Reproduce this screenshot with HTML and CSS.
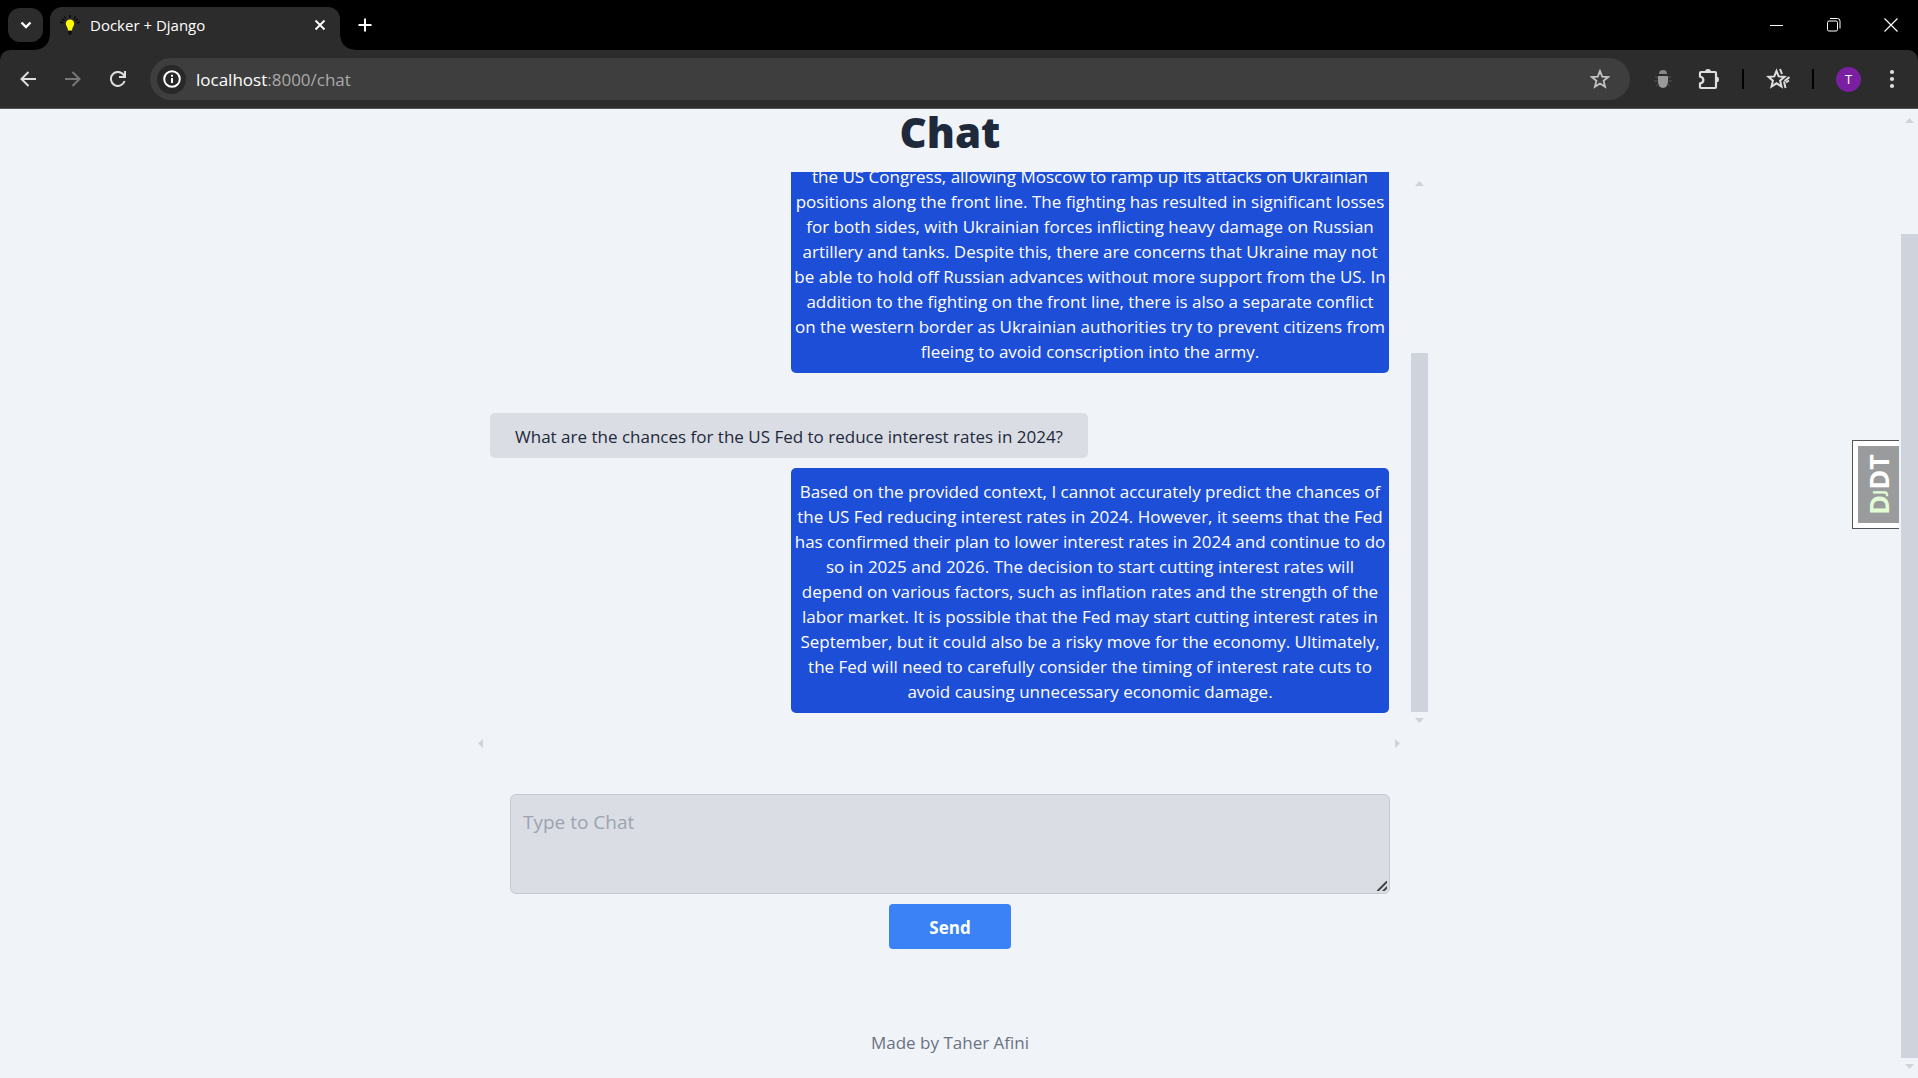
FILE: index.html
```html
<!DOCTYPE html>
<html lang="en">
<head>
<meta charset="utf-8">
<title>Docker + Django</title>
<link rel="stylesheet" href="styles.css">
</head>
<body>
<header class="browser">
  <div class="tabstrip">
    <button class="tab-search" aria-label="Search tabs"><svg width="16" height="16" viewBox="0 0 16 16"><path d="M3.500 5.500L8 10L12.500 5.500" fill="none" stroke="#fff" stroke-width="2.400"/></svg></button>
    <div class="tab">
      <svg width="20" height="20" viewBox="0 0 20 20"><path d="M10 0v3M4.500 1.500l1.500 2.500M15.500 1.500L14 4M0 7l3.500 1M20 7l-3.500 1M2 4l2.500 1.500M18 4l-2.500 1.500" stroke="#000" stroke-width="1.200"/><path d="M10 4.500C7.500 4.500 5.800 6.200 5.800 8.500C5.800 11 8 12.500 8 15.500H12C12 12.500 14.200 11 14.200 8.500C14.200 6.200 12.500 4.500 10 4.500Z" fill="#ff0"/><path d="M8 16h4v2l-1 2H9l-1-2z" fill="#111"/></svg>
      <span class="tab-title">Docker + Django</span>
      <button class="icon" aria-label="Close tab"><svg width="12" height="12" viewBox="0 0 12 12"><path d="M1.500 1.500L10.500 10.500M10.500 1.500L1.500 10.500" stroke="#fff" stroke-width="1.900"/></svg></button>
    </div>
    <button class="icon new-tab" aria-label="New tab"><svg width="14" height="14" viewBox="0 0 14 14"><path d="M7 .5v13M.5 7h13" stroke="#fff" stroke-width="2"/></svg></button>
    <div class="window-controls">
      <button class="icon" aria-label="Minimize"><svg width="14" height="14" viewBox="0 0 14 14"><path d="M0 7.500h13" stroke="#fff"/></svg></button>
      <button class="icon" aria-label="Restore"><svg width="14" height="14" viewBox="0 0 14 14" fill="none" stroke="#fff"><rect x=".5" y="3" width="10" height="10" rx="1.500"/><path d="M3 .5h7.500a2.500 2.500 0 0 1 2.500 2.500v7.500"/></svg></button>
      <button class="icon" aria-label="Close"><svg width="14" height="14" viewBox="0 0 14 14"><path d="M.5 .5l13 13M13.500 .5l-13 13" stroke="#fff" stroke-width="1.200"/></svg></button>
    </div>
  </div>
  <div class="toolbar">
    <nav class="nav">
      <button class="icon" aria-label="Back"><svg width="16" height="16" viewBox="0 0 16 16" fill="none" stroke="#dedede" stroke-width="2"><path d="M8.500 1L1.500 8L8.500 15M1.500 8H16"/></svg></button>
      <button class="icon" aria-label="Forward"><svg width="16" height="16" viewBox="0 0 16 16" fill="none" stroke="#777" stroke-width="2"><path d="M7.500 1L14.500 8L7.500 15M14.500 8H0"/></svg></button>
      <button class="icon" aria-label="Reload"><svg width="16" height="16" viewBox="0 0 16 16" fill="none" stroke="#dedede" stroke-width="2"><path d="M14.600 10A7 7 0 1 1 13.500 3.700L15 6M15 0v6H9"/></svg></button>
    </nav>
    <div class="omnibox">
      <button class="site-info" aria-label="Site information"><svg width="18" height="18" viewBox="0 0 18 18"><circle cx="9" cy="9" r="7.800" fill="none" stroke="#fff" stroke-width="2"/><path d="M9 8v5M9 4.800v2" stroke="#fff" stroke-width="2"/></svg></button>
      <a class="url" href="#">localhost<span class="url-path">:8000/chat</span></a>
      <button class="icon" aria-label="Bookmark"><svg width="20" height="20" viewBox="0 0 20 20"><path d="M10 2l2.200 5.600 6 .4-4.600 3.900 1.500 5.900L10 14.500l-5.100 3.300 1.500-5.900L1.800 8l6-.4z" fill="none" stroke="#c4c4c4" stroke-width="1.800"/></svg></button>
    </div>
    <div class="extensions">
      <button class="icon" aria-label="Debugger"><svg width="18" height="18" viewBox="0 0 18 18"><path d="M5 4a4 4 0 0 1 8 0z" fill="#888"/><path d="M4 6h10v6a5 6 0 0 1-10 0z" fill="#999"/><path d="M4 8L1 6.500M3.500 11H0M4.500 14L2 16M14 8l3-1.500M14.500 11H18M13.500 14l2.500 2" stroke="#555"/></svg></button>
      <button class="icon puzzle" aria-label="Extensions"><svg width="22" height="22" viewBox="0 0 22 22"><path d="M3.500 4H17a1 1 0 0 1 1 1V19a1 1 0 0 1-1 1H3a1 1 0 0 1-1-1V15.500C6.500 14.500 6.500 9.500 2 8.500V5a1 1 0 0 1 1-1z" fill="none" stroke="#dedede" stroke-width="2.200"/><path d="M7 4a3 3 0 0 1 6 0zM18 8.500a3 3 0 0 1 0 6z" fill="#dedede"/></svg></button>
      <span class="divider"></span>
      <button class="icon" aria-label="Favorites"><svg width="24" height="22" viewBox="0 0 24 22" fill="none" stroke="#dedede" stroke-width="2"><path d="M10.500 3l2.200 5.400 5.800.5-4.400 3.800 1.400 5.800-5-3.200-5 3.200 1.400-5.800L2.500 8.900l5.800-.5z"/><path d="M14 1l2 5M23.500 9l-5 4M18 13.500l1.500 6.500M23 12.500l-3 2"/></svg></button>
      <span class="divider"></span>
      <button class="avatar" aria-label="Profile">T</button>
      <button class="icon menu" aria-label="Menu"><svg width="6" height="20" viewBox="0 0 6 20" fill="#dedede"><circle cx="3" cy="3" r="2.100"/><circle cx="3" cy="10" r="2.100"/><circle cx="3" cy="17" r="2.100"/></svg></button>
    </div>
  </div>
</header>

<div class="viewport">
  <main class="page">
    <h1 class="title">Chat</h1>
    <section class="chat">
      <div class="messages">
        <p class="message bot">the US Congress, allowing Moscow to ramp up its attacks on Ukrainian<br>positions along the front line. The fighting has resulted in significant losses<br>for both sides, with Ukrainian forces inflicting heavy damage on Russian<br>artillery and tanks. Despite this, there are concerns that Ukraine may not<br>be able to hold off Russian advances without more support from the US. In<br>addition to the fighting on the front line, there is also a separate conflict<br>on the western border as Ukrainian authorities try to prevent citizens from<br>fleeing to avoid conscription into the army.</p>
        <p class="message user">What are the chances for the US Fed to reduce interest rates in 2024?</p>
        <p class="message bot">Based on the provided context, I cannot accurately predict the chances of<br>the US Fed reducing interest rates in 2024. However, it seems that the Fed<br>has confirmed their plan to lower interest rates in 2024 and continue to do<br>so in 2025 and 2026. The decision to start cutting interest rates will<br>depend on various factors, such as inflation rates and the strength of the<br>labor market. It is possible that the Fed may start cutting interest rates in<br>September, but it could also be a risky move for the economy. Ultimately,<br>the Fed will need to carefully consider the timing of interest rate cuts to<br>avoid causing unnecessary economic damage.</p>
      </div>
      <div class="scrollbar chat-scroll">
        <svg class="arrow" viewBox="0 0 17 17"><path d="M4 11h9L8.500 6z"/></svg>
        <div class="thumb"></div>
        <svg class="arrow" viewBox="0 0 17 17"><path d="M4 6h9l-4.500 5z"/></svg>
      </div>
    </section>
    <div class="side-scroll">
      <svg class="arrow" viewBox="0 0 17 17"><path d="M11 4v9L6 8.500z"/></svg>
      <svg class="arrow" viewBox="0 0 17 17"><path d="M6 4v9l5-4.500z"/></svg>
    </div>
    <form class="composer">
      <textarea class="prompt" aria-label="Type to Chat" placeholder="Type to Chat"></textarea>
      <button class="send" type="button">Send</button>
    </form>
    <footer class="footer">Made by Taher Afini</footer>
    <a class="djdt" href="#"><span class="djdt-label"><span class="djdt-dj">D<span class="djdt-j">J</span></span>DT</span></a>
  </main>
  <div class="scrollbar page-scroll">
    <svg class="arrow" viewBox="0 0 17 17"><path d="M4 11h9L8.500 6z"/></svg>
    <div class="thumb"></div>
    <svg class="arrow" viewBox="0 0 17 17"><path d="M4 6h9l-4.500 5z"/></svg>
  </div>
</div>
</body>
</html>
```
FILE: styles.css
```css
* { box-sizing: border-box; }

body {
  margin: 0;
  height: 100vh;
  display: flex;
  flex-direction: column;
  overflow: hidden;
  background: #f0f4f9;
  color: #1e293b;
  font: 17px/25px "Open Sans", "Noto Sans", sans-serif;
}

button {
  border: 0;
  padding: 0;
  background: none;
  font: inherit;
  color: inherit;
}

svg { display: block; }

.icon { display: grid; place-items: center; flex: none; }

/* Browser chrome */
.browser { background: #000; color: #fff; flex: none; }

.tabstrip {
  display: flex;
  align-items: center;
  height: 50px;
  padding: 0 20px 0 8px;
}

.tab-search {
  display: grid;
  place-items: center;
  width: 35px;
  height: 34px;
  border-radius: 12px;
  background: #2c2c2c;
}

.tab {
  position: relative;
  display: flex;
  align-items: center;
  gap: 10px;
  align-self: flex-end;
  width: 290px;
  height: 43px;
  margin-left: 7px;
  padding: 0 14px 8px 10px;
  border-radius: 12px 12px 0 0;
  background: #2c2c2c;
}

.tab::before,
.tab::after {
  content: "";
  position: absolute;
  bottom: 0;
  width: 14px;
  height: 14px;
}
.tab::before { right: 100%; background: radial-gradient(circle at 0 0, #0000 13px, #2c2c2c 14px); }
.tab::after { left: 100%; background: radial-gradient(circle at 100% 0, #0000 13px, #2c2c2c 14px); }

.tab-title { flex: 1; font-size: 15px; line-height: 20px; }
.new-tab { margin-left: 18px; }

.window-controls { display: flex; gap: 43px; margin-left: auto; }

.toolbar {
  display: flex;
  align-items: center;
  height: 59px;
  padding: 0 23px 0 20px;
  border-bottom: 1px solid #555;
  border-radius: 10px 10px 0 0;
  background: #2c2c2c;
}

.nav { display: flex; gap: 29px; }

.omnibox {
  display: flex;
  align-items: center;
  flex: 1;
  height: 42px;
  margin: 0 24px;
  padding: 0 20px 0 7px;
  border-radius: 21px;
  background: #3e3e3e;
}

.site-info {
  display: grid;
  place-items: center;
  width: 29px;
  height: 29px;
  border-radius: 50%;
  background: #282828;
}

.url { flex: 1; margin-left: 10px; color: #fff; text-decoration: none; }
.url-path { color: #aaa; }

.extensions { display: flex; align-items: center; gap: 22px; }
.puzzle { margin-left: 4px; }
.menu { margin-left: 6px; }
.divider { width: 2px; height: 20px; background: #000; }

.avatar {
  width: 25px;
  height: 25px;
  border-radius: 50%;
  background: #7b1fa2;
  font-size: 13px;
  line-height: 25px;
}

/* Page */
.viewport { display: flex; flex: 1; min-height: 0; }

.page {
  position: relative;
  display: flex;
  flex-direction: column;
  align-items: center;
  flex: 1;
  min-width: 0;
  padding-right: 1px;
}

.title {
  margin: 0 0 17px;
  font-size: 42px;
  font-weight: 800;
  line-height: 46px;
}

.chat {
  display: flex;
  width: 100%;
  max-width: 956px;
  height: 558px;
}

.messages {
  display: flex;
  flex-direction: column;
  justify-content: flex-end;
  gap: 10px;
  flex: 1;
  padding: 0 22px 17px 18px;
  overflow: hidden;
}

.message {
  flex: none;
  width: 598px;
  max-width: 100%;
  margin: 0;
  padding: 11px 0 9px;
  border-radius: 5px;
  text-align: center;
}
.bot { align-self: flex-end; background: #1d4ed8; color: #fff; }
.user { margin-top: 30px; background: #dadde4; }

.scrollbar {
  display: flex;
  flex-direction: column;
  align-items: center;
  width: 17px;
  flex: none;
}
.arrow { width: 17px; height: 17px; fill: #cfd3da; }
.thumb { width: 17px; background: #cfd3dc; }
.chat-scroll { justify-content: space-between; padding: 3px 0 1px; }
.chat-scroll .thumb { height: 359px; margin-top: auto; }
.page-scroll { padding: 3px 0; }
.page-scroll .thumb { flex: 1; margin-top: 105px; }

.side-scroll {
  display: flex;
  justify-content: space-between;
  width: 100%;
  max-width: 956px;
  margin-top: 5px;
  padding-right: 22px;
}

.composer {
  display: flex;
  flex-direction: column;
  align-items: center;
  gap: 10px;
  width: 100%;
  max-width: 880px;
  margin-top: 42px;
}

.prompt {
  width: 100%;
  height: 100px;
  padding: 13px 12px;
  border: 1px solid #c6c9cf;
  border-radius: 6px;
  background: #dadde4;
  font: 19px/28px "Open Sans", "Noto Sans", sans-serif;
  resize: vertical;
}
.prompt::placeholder { color: #9ca3af; }
.prompt::-webkit-resizer {
  background: linear-gradient(135deg, #0000 6px, #444 7px 8px, #0000 9px 10px, #444 11px 12px, #0000 13px) 3px 3px / 10px 10px no-repeat;
}

.send {
  padding: 11px 40px 9px;
  border-radius: 4px;
  background: #3b82f6;
  color: #fff;
  font-weight: 700;
}

.footer { margin-top: 81px; color: #6b7280; }

/* Debug toolbar handle, pinned to the right edge over the page */
.djdt {
  position: absolute;
  top: 331px;
  right: 2px;
  height: 89px;
  padding: 5px 0 5px 5px;
  border: 1px solid #555;
  border-right: 0;
  background: #fff;
  color: #fff;
  text-decoration: none;
}
.djdt-label {
  display: block;
  width: 41px;
  height: 100%;
  background: #9a9b9c;
  font-size: 27px;
  font-weight: 700;
  line-height: 41px;
  text-align: center;
  white-space: nowrap;
  writing-mode: vertical-rl;
  transform: rotate(180deg);
}
.djdt-dj { color: #e2fcd5; }
.djdt-j { font-size: 16px; }
```
